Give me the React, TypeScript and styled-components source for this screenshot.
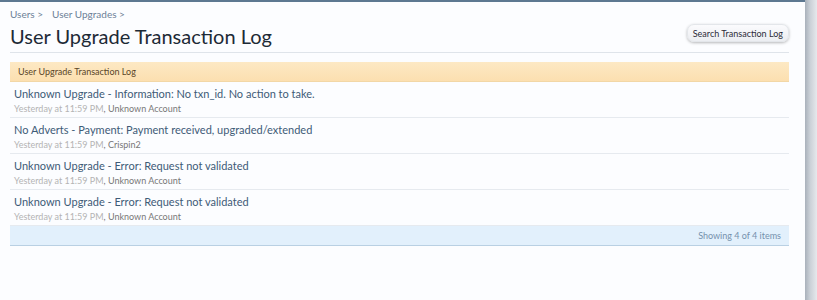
import styled, { createGlobalStyle } from "styled-components";

const GlobalStyle = createGlobalStyle`
  html, body {
    margin: 0;
    padding: 0;
    background: #fcfdff;
  }
  body {
    font-family: Lato, "Liberation Sans", sans-serif;
  }
`;

const Frame = styled.div`
  display: flex;
  height: 300px;
`;

const Main = styled.div`
  width: 805px;
  border-top: 2px solid #5d7891;
  background: #fcfdff;
  padding: 0 16px 0 10px;
  box-sizing: border-box;
`;

const Edge = styled.div`
  width: 12px;
  background: linear-gradient(to right, #a9b1bb, #c9cfd6 40%, #e6e9ec);
`;

const Breadcrumb = styled.div`
  display: flex;
  gap: 9px;
  padding-top: 6px;
  font-size: 10px;
  line-height: 12px;
  color: #6c8197;
`;

const TitleRow = styled.div`
  display: flex;
  align-items: flex-start;
  justify-content: space-between;
  height: 32px;
  border-bottom: 1px solid #dfe4ea;
  margin-bottom: 9px;
`;

const Title = styled.h1`
  margin: 0;
  font-weight: normal;
  font-size: 20px;
  line-height: 28px;
  color: #1d2a36;
  padding-top: 2px;
`;

const Button = styled.button`
  font-family: inherit;
  font-size: 9px;
  color: #2c2c38;
  height: 18px;
  padding: 0 5px;
  border: 1px solid #e3e6ea;
  border-radius: 7px;
  background: linear-gradient(to bottom, #fbfbfd, #eceef2);
  box-shadow: 0 1px 3px rgba(0, 0, 0, 0.28);
  margin-top: 4px;
`;

const HeaderBar = styled.div`
  height: 19px;
  line-height: 19px;
  padding: 0 8px;
  font-size: 9px;
  color: #5a4528;
  background: linear-gradient(to bottom, #fde9c4, #fcdfb0);
  border-bottom: 1px solid #f2d7a6;
`;

const Row = styled.div`
  padding: 4px 4px 1px;
  border-bottom: 1px solid #e6eaef;
`;

const RowTitle = styled.div`
  font-size: 11px;
  line-height: 16px;
  color: #3e5b77;
`;

const Meta = styled.div`
  font-size: 9px;
  line-height: 14px;
  color: #777;
`;

const Time = styled.span`
  color: #b4b4b4;
`;

const Footer = styled.div`
  height: 19px;
  line-height: 19px;
  text-align: right;
  padding: 0 8px;
  font-size: 9px;
  color: #7591ad;
  background: #e2f0fc;
  border-bottom: 1px solid #b9d0e3;
`;

const entries = [
  { title: "Unknown Upgrade - Information: No txn_id. No action to take.", user: "Unknown Account" },
  { title: "No Adverts - Payment: Payment received, upgraded/extended", user: "Crispin2" },
  { title: "Unknown Upgrade - Error: Request not validated", user: "Unknown Account" },
  { title: "Unknown Upgrade - Error: Request not validated", user: "Unknown Account" },
];

export default function App() {
  return (
    <>
      <GlobalStyle />
      <Frame>
        <Main>
          <Breadcrumb>
            <span>Users &gt;</span>
            <span>User Upgrades &gt;</span>
          </Breadcrumb>
          <TitleRow>
            <Title>User Upgrade Transaction Log</Title>
            <Button>Search Transaction Log</Button>
          </TitleRow>
          <HeaderBar>User Upgrade Transaction Log</HeaderBar>
          {entries.map((e, i) => (
            <Row key={i}>
              <RowTitle>{e.title}</RowTitle>
              <Meta>
                <Time>Yesterday at 11:59 PM</Time>, {e.user}
              </Meta>
            </Row>
          ))}
          <Footer>Showing 4 of 4 items</Footer>
        </Main>
        <Edge />
      </Frame>
    </>
  );
}
